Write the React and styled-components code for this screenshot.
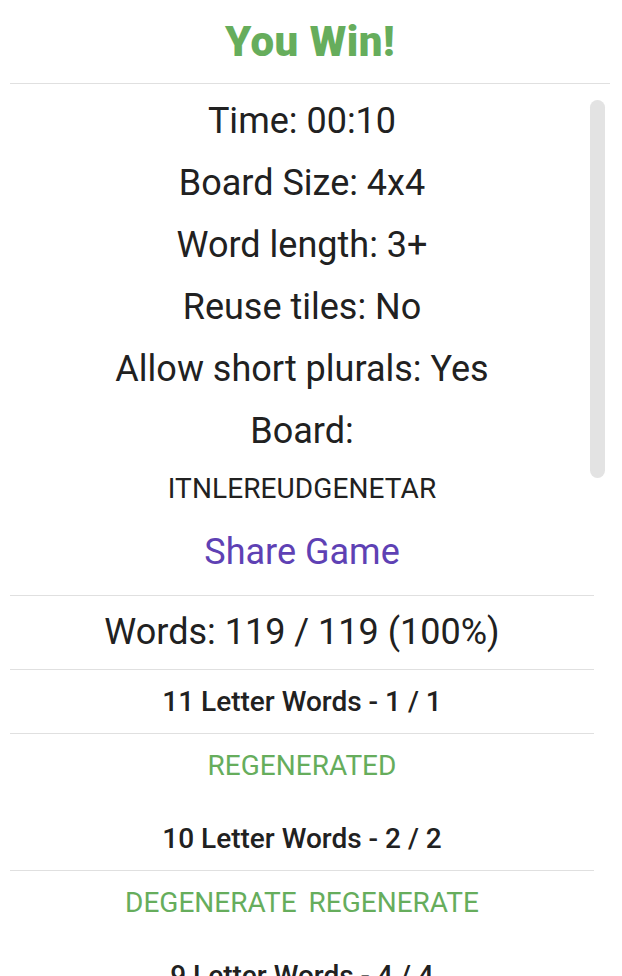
import React from "react";
import styled, { createGlobalStyle } from "styled-components";

const GlobalStyle = createGlobalStyle`
  html, body {
    margin: 0;
    padding: 0;
    background: #ffffff;
    font-family: Roboto, "Noto Sans", sans-serif;
    color: #212121;
  }
`;

const Page = styled.div`
  width: 622px;
  height: 976px;
  padding: 0 12px 0 10px;
  box-sizing: border-box;
  display: flex;
  flex-direction: column;
  overflow: hidden;
`;

const Header = styled.div`
  height: 83px;
  display: flex;
  align-items: center;
  justify-content: center;
  border-bottom: 1px solid #e0e0e0;
  flex-shrink: 0;
`;

const Title = styled.h1`
  margin: 0;
  font-family: Roboto, sans-serif;
  font-weight: 900;
  font-size: 42px;
  letter-spacing: 0.5px;
  color: #66ad5c;
`;

const ScrollArea = styled.div`
  position: relative;
  flex: 1;
  overflow: hidden;
`;

const Content = styled.div`
  width: 584px;
  padding-top: 6px;
`;

const Thumb = styled.div`
  position: absolute;
  top: 16px;
  left: 580px;
  width: 15px;
  height: 378px;
  border-radius: 8px;
  background: #e3e3e3;
`;

const StatRow = styled.div`
  height: 62px;
  line-height: 62px;
  text-align: center;
  font-size: 36px;
`;

const BoardLetters = styled.div`
  height: 54px;
  line-height: 54px;
  text-align: center;
  font-size: 28px;
  letter-spacing: 0.1px;
`;

const ShareButton = styled.div`
  height: 72px;
  line-height: 72px;
  text-align: center;
  font-size: 36px;
  color: #5e41b4;
  margin-bottom: 7px;
`;

const WordCount = styled.div`
  height: 73px;
  line-height: 73px;
  text-align: center;
  font-size: 36px;
  border-top: 1px solid #e0e0e0;
  border-bottom: 1px solid #e0e0e0;
`;

const GroupHeader = styled.div`
  height: 63px;
  line-height: 63px;
  text-align: center;
  font-size: 28px;
  font-weight: 500;
  border-bottom: 1px solid #e0e0e0;
`;

const WordList = styled.div`
  display: flex;
  flex-wrap: wrap;
  justify-content: center;
  column-gap: 12px;
  padding-bottom: 9px;
`;

const Word = styled.span`
  height: 64px;
  line-height: 64px;
  font-size: 28px;
  color: #66ad5c;
`;

const stats = [
  "Time: 00:10",
  "Board Size: 4x4",
  "Word length: 3+",
  "Reuse tiles: No",
  "Allow short plurals: Yes",
  "Board:",
];

const groups = [
  { title: "11 Letter Words - 1 / 1", words: ["REGENERATED"] },
  { title: "10 Letter Words - 2 / 2", words: ["DEGENERATE", "REGENERATE"] },
  { title: "9 Letter Words - 4 / 4", words: ["GENERATED", "REGENERATE"] },
];

export default function App() {
  return (
    <>
      <GlobalStyle />
      <Page>
        <Header>
          <Title>You Win!</Title>
        </Header>
        <ScrollArea>
          <Content>
            {stats.map((s) => (
              <StatRow key={s}>{s}</StatRow>
            ))}
            <BoardLetters>ITNLEREUDGENETAR</BoardLetters>
            <ShareButton>Share Game</ShareButton>
            <WordCount>Words: 119 / 119 (100%)</WordCount>
            {groups.map((g) => (
              <React.Fragment key={g.title}>
                <GroupHeader>{g.title}</GroupHeader>
                <WordList>
                  {g.words.map((w) => (
                    <Word key={w}>{w}</Word>
                  ))}
                </WordList>
              </React.Fragment>
            ))}
          </Content>
          <Thumb />
        </ScrollArea>
      </Page>
    </>
  );
}
